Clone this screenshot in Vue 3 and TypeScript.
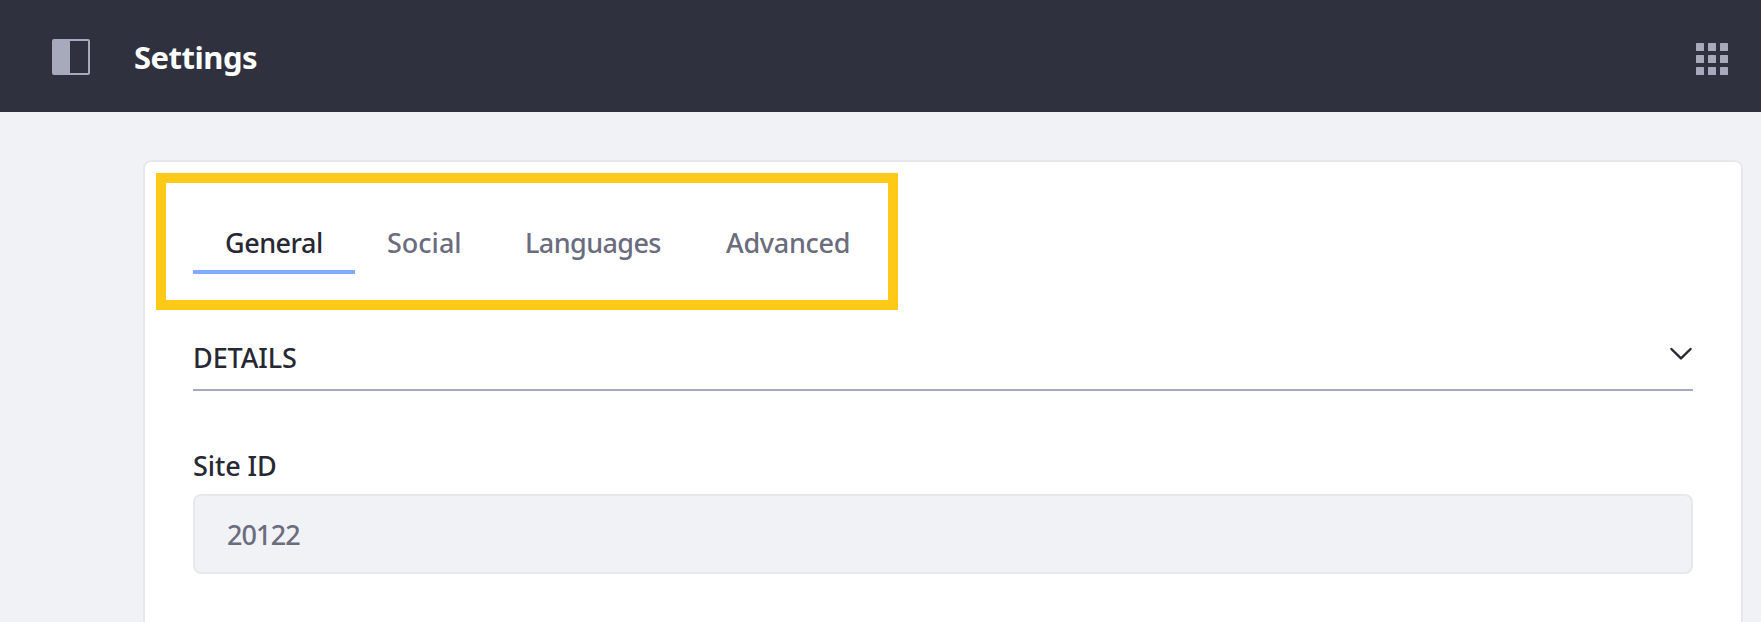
<script setup lang="ts">
import { ref } from 'vue'

interface Tab {
  id: string
  label: string
}

const tabs: Tab[] = [
  { id: 'general', label: 'General' },
  { id: 'social', label: 'Social' },
  { id: 'languages', label: 'Languages' },
  { id: 'advanced', label: 'Advanced' },
]
const active = ref('general')
const siteId = ref('20122')
const gridCells = [0, 12, 24]
</script>

<template>
  <div class="page">
    <header class="bar">
      <svg class="panel-icon" width="38" height="36" viewBox="0 0 38 36">
        <rect x="1" y="1" width="36" height="34" rx="1" fill="none" stroke="#a7a9bc" stroke-width="2" />
        <rect x="1" y="1" width="17" height="34" fill="#a7a9bc" />
      </svg>
      <h1 class="title">Settings</h1>
      <svg class="apps-icon" width="32" height="32" viewBox="0 0 32 32" fill="#a7a9bc">
        <template v-for="y in gridCells" :key="y">
          <rect v-for="x in gridCells" :key="x" :x="x" :y="y" width="8" height="8" rx="0.6" />
        </template>
      </svg>
    </header>
    <main class="card">
      <div class="highlight">
        <nav class="tabs">
          <button
            v-for="tab in tabs"
            :key="tab.id"
            type="button"
            class="tab"
            :class="[tab.id, { active: active === tab.id }]"
            @click="active = tab.id"
          ><span>{{ tab.label }}</span></button>
        </nav>
      </div>
      <section class="details">
        <div class="section-head">
          <h2><span>DETAILS</span></h2>
          <svg class="chevron" width="24" height="14" viewBox="0 0 24 14">
            <path d="M2.4 2 12 11.4 21.6 2" fill="none" stroke="#272833" stroke-width="2.4" stroke-linecap="round" stroke-linejoin="round" />
          </svg>
        </div>
        <div class="label">Site ID</div>
        <div class="field"><span>{{ siteId }}</span></div>
      </section>
    </main>
  </div>
</template>

<style>
body {
  margin: 0;
  background: #f1f2f5;
}
</style>

<style scoped>
.page {
  box-sizing: border-box;
  height: 622px;
  overflow: hidden;
  background: #f1f2f5;
  font-family: "Noto Sans", "Open Sans", sans-serif;
  font-size: 27px;
  color: #272833;
}
.bar {
  box-sizing: border-box;
  height: 112px;
  display: flex;
  align-items: center;
  padding: 0 33px 0 52px;
  background: #30313f;
}
.panel-icon {
  margin-top: 2px;
}
.title {
  margin: 2px 0 0 44px;
  font-size: 31px;
  line-height: 44px;
  font-weight: 700;
  letter-spacing: -0.5px;
  color: #fff;
}
.apps-icon {
  margin-left: auto;
  margin-top: 6px;
}
.card {
  box-sizing: border-box;
  width: 1600px;
  height: 520px;
  margin: 48px 0 0 143px;
  padding: 11px 48px 0 11px;
  border: 2px solid #e7e7ed;
  border-radius: 8px;
  background: #fff;
}
.highlight {
  box-sizing: border-box;
  width: 742px;
  height: 137px;
  padding: 41px 0 0 27px;
  border: 10px solid #ffc918;
}
.tabs {
  display: flex;
}
.tab {
  box-sizing: border-box;
  height: 50px;
  padding: 0 0 0 32px;
  border: 0;
  border-bottom: 4px solid transparent;
  background: none;
  font: inherit;
  font-weight: 540;
  line-height: 38px;
  text-align: left;
  white-space: nowrap;
  color: #6b6c7e;
}
.tab span {
  display: block;
  height: 46px;
}
.tab.active {
  border-bottom-color: #80acff;
  color: #272833;
}
.general { width: 162px; letter-spacing: -0.5px; }
.social { width: 138px; letter-spacing: 0; }
.languages { width: 201px; letter-spacing: -0.6px; }
.advanced { width: 188px; letter-spacing: -0.3px; }
.details {
  margin: 25px 0 0 37px;
}
.section-head {
  box-sizing: border-box;
  display: flex;
  justify-content: space-between;
  height: 56px;
  border-bottom: 2px solid #a7a9bc;
}
.section-head h2 {
  margin: 4px 0 0;
  font-size: 27px;
  line-height: 38px;
  font-weight: 500;
  letter-spacing: -0.1px;
}
.chevron {
  margin-top: 12px;
}
.label {
  margin-top: 56px;
  height: 47px;
  line-height: 38px;
  font-weight: 540;
  letter-spacing: -0.1px;
}
.field {
  box-sizing: border-box;
  height: 80px;
  padding: 20px 32px;
  border: 2px solid #e7e7ed;
  border-radius: 8px;
  background: #f1f2f5;
  color: #6b6c7e;
  line-height: 38px;
  font-weight: 540;
  letter-spacing: -0.9px;
}
</style>
